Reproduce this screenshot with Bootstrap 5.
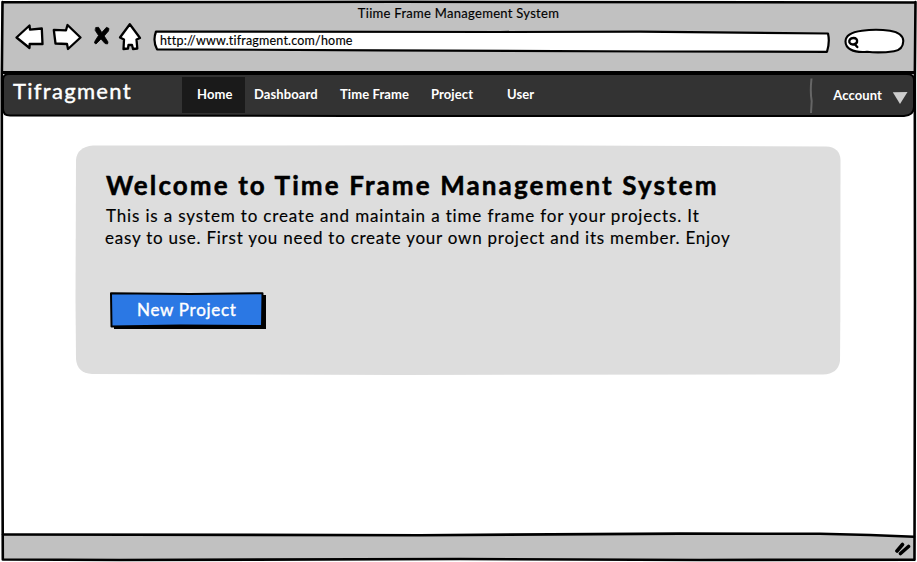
<!DOCTYPE html>
<html lang="en">
<head>
<meta charset="utf-8">
<meta name="viewport" content="width=device-width, initial-scale=1">
<title>Tiime Frame Management System</title>
<link href="https://cdn.jsdelivr.net/npm/bootstrap@5.3.0/dist/css/bootstrap.min.css" rel="stylesheet">
<style>
body{font-family:Lato,"Open Sans",sans-serif;color:#000;background:#fff;font-size:13px;line-height:16px}
.layers{display:grid;grid-template-columns:100%}
.layers>*{grid-area:1/1;min-width:0}
.window{width:917px;height:562px;overflow:hidden}
svg{display:block}
.ink{stroke:#000;stroke-linejoin:round;stroke-linecap:round}
.browser-head{height:72px;padding:5px 12px 0 14px}
.win-title{letter-spacing:.29px;height:16px;padding-right:2px;-webkit-text-stroke:.15px #000}
.toolbar-row{height:34px}
.address{width:678px;height:24px;margin:8px 0 0 9px}
.address span{font-size:12.5px;letter-spacing:.2px;padding:4px 0 0 7px;-webkit-text-stroke:.15px #000}
.search-box{margin:7px -1px 0 0}
.site-nav{height:45px;padding:0 9px 0 13px}
.site-nav .navbar-brand{font-size:22px;line-height:28px;letter-spacing:1.3px;color:#fff;width:169px;margin:0;padding:5px 0 0;-webkit-text-stroke:.4px #fff}
.site-nav .nav-link{font-size:13px;line-height:16px;font-weight:700;letter-spacing:.1px;color:#fff;padding:9px 0 0;height:36px;margin-top:5px;white-space:nowrap}
.site-nav .nav-link.active{background:#1a1a1a;color:#fff;width:63px;padding-left:15px;padding-right:0}
.n2{width:86px;padding-left:9px!important}.n3{width:91px;padding-left:9px!important}.n4{width:76px;padding-left:9px!important}.n5{padding-left:9px!important}
.site-nav .acct{margin-top:6px;margin-left:3px}
.tri{margin:19px 0 0 2px}
.hero-wrap{height:417px;padding:28px 0 0 75px}
.hero{width:767px;height:231px}
.hero-body{padding:24px 0 0 31px}
.hero h1{font-size:26px;line-height:32px;font-weight:700;letter-spacing:2.11px;margin:0;white-space:nowrap;-webkit-text-stroke:.5px #000}
.hero p{font-size:17px;line-height:22px;margin:4px 0 0 -1px;white-space:nowrap;-webkit-text-stroke:.15px #000}
.l1,.l2{display:block}
.l1{letter-spacing:.85px;padding-left:1px}.l2{letter-spacing:.76px}
.new-btn{width:157px;height:38px;margin:42px 0 0 3px;border:0;background:none;padding:0}
.new-btn span{font-size:17px;line-height:22px;color:#fff;letter-spacing:.72px;padding:8px 0 0 28px;text-align:left;-webkit-text-stroke:.4px #fff}
footer{padding-top:4px}
</style>
<script src="https://cdn.jsdelivr.net/npm/bootstrap@5.3.0/dist/js/bootstrap.bundle.min.js"></script>
</head>
<body>
<div class="window layers">
<svg width="917" height="562" viewBox="0 0 917 562" aria-hidden="true">
<path d="M3 2.500L915 2.500V72H3Z" fill="#c1c1c1"/>
<path d="M3 534.500L420 535L830 534L915 537V560H3Z" fill="#c1c1c1"/>
<g fill="none" class="ink" stroke-width="2.600">
<path d="M3 2.200L400 1.800L914.500 2.500M2.500 2L1.800 80L2 340L2.800 559.500L120 560L460 559L700 560L914.500 559.700L915 300L914.800 80L915.500 2"/>
<path d="M3 534.500L420 535.200L680 533.600L820 533.800L870 535L914 536.800"/>
<path d="M3 72.500L914 72.500" stroke-width="3"/></g>
<path d="M9 74Q3 74 3 80V109Q3 115.500 10 115.500L350 116H904Q914 115 914 107V80Q914 74 907 74Z" fill="#333" class="ink" stroke-width="2"/>
</svg>
<div class="d-flex flex-column">
<header class="browser-head">
<div class="win-title text-center">Tiime Frame Management System</div>
<div class="toolbar-row d-flex align-items-start">
<svg width="130" height="34" viewBox="14 21 130 34" role="img" aria-label="Back, forward, stop, home">
<g fill="#fff" class="ink" stroke-width="2.300">
<path d="M16.500 37.500L29.500 25.500L30 29.700L41.800 28.500L42.500 44L29.700 43.800L29.500 48Z"/>
<path d="M53.800 29.800L66 30.300L67.500 25L80.500 37.500L68 49L67 44L55.500 43.500Z"/>
<path d="M129.800 24.200L120 37.500L124 39.500L123.500 49L128 48.500L128.500 45H132L133 49L137.300 48.500L136.500 39.500L140 38Z"/></g>
<path d="M96 27.500L98.500 27.300L101.800 32.500L106.500 27.300L109 28.500L108.500 31L104.200 36L108 42L107.500 44L105 43.500L101 39L96 44L94.500 43L95 41L98.500 35.500L95.300 30.500Z" fill="#000" class="ink" stroke-width=".8"/>
</svg>
<div class="address layers">
<svg width="678" height="24" viewBox="153 29 678 24" aria-hidden="true"><path d="M156 31.500L500 32L640 31.600L828 33.500Q830 42 827 51.800L650 51.500L380 50.300L157 49.300Q152.500 41 156 31.500Z" fill="#fff" class="ink" stroke-width="2.200"/></svg>
<span>http://www.tifragment.com/home</span>
</div>
<svg class="search-box ms-auto" width="62" height="26" viewBox="844 28 62 26" role="img" aria-label="Search"><path d="M862 30.800Q876 28.800 890 30.800Q903 33 903.300 41Q903 50 894 51.200Q880 53.300 867 51.800C852 53 845.500 48 845.500 41.500C845.500 34 854 31.800 862 30.800Z" fill="#fff" class="ink" stroke-width="2.100"/><path d="M853.500 38C850 38 848.800 40.500 849.500 42.500C851 45.500 856 45 857 42C857.500 39.500 856 38 853.500 38M854.500 44L857.300 47" fill="none" class="ink" stroke-width="2.400"/></svg>
</div>
</header>
<nav class="site-nav navbar navbar-expand align-items-start">
<a class="navbar-brand" href="#">Tifragment</a>
<div class="navbar-nav">
<a class="nav-link active" href="#">Home</a><a class="nav-link n2" href="#">Dashboard</a><a class="nav-link n3" href="#">Time Frame</a><a class="nav-link n4" href="#">Project</a><a class="nav-link n5" href="#">User</a>
</div>
<div class="navbar-nav ms-auto">
<svg width="5" height="40" viewBox="809 75 5 40" class="mt-1" aria-hidden="true"><path d="M811.500 77.500Q810 91 811.700 100L811 112" fill="none" stroke="#666" stroke-width="2"/></svg>
<a class="nav-link ps-3 acct" href="#">Account</a>
<svg width="16" height="14" viewBox="892 91 16 14" class="tri" aria-hidden="true"><path d="M892.800 92.300L907.500 92L900 104Z" fill="#ccc"/></svg>
</div>
</nav>
<main class="hero-wrap">
<section class="hero layers">
<svg width="767" height="231" viewBox="75 145 767 231" aria-hidden="true"><path d="M93 145.500L500 145.300L826 146.500Q840 147 840.500 160L840.300 320L840 361Q838 374 823 374.500L400 375L92 374Q77 373 76 359L75.500 300L76 160Q77 147 93 145.500Z" fill="#ddd"/></svg>
<div class="hero-body">
<h1>Welcome to Time Frame Management System</h1>
<p><span class="l1">This is a system to create and maintain a time frame for your projects. It</span><span class="l2">easy to use. First you need to create your own project and its member. Enjoy</span></p>
<button type="button" class="new-btn layers">
<svg width="157" height="38" viewBox="109 291 157 38" aria-hidden="true"><path d="M114 295H266V329.300H114Z"/><path d="M111 293.200L190 294L262.500 293.200L262 326L180 325.500L111.500 326.500Z" fill="#2b78e4" class="ink" stroke-width="2"/></svg>
<span>New Project</span></button>
</div>
</section>
</main>
<footer class="d-flex justify-content-end">
<svg width="22" height="20" viewBox="895 538 22 20" aria-hidden="true"><path d="M897 551L902.500 544.500M900.500 553.500L908.500 546.500" fill="none" class="ink" stroke-width="3.600"/></svg>
</footer>
</div>
</div>
</body>
</html>
